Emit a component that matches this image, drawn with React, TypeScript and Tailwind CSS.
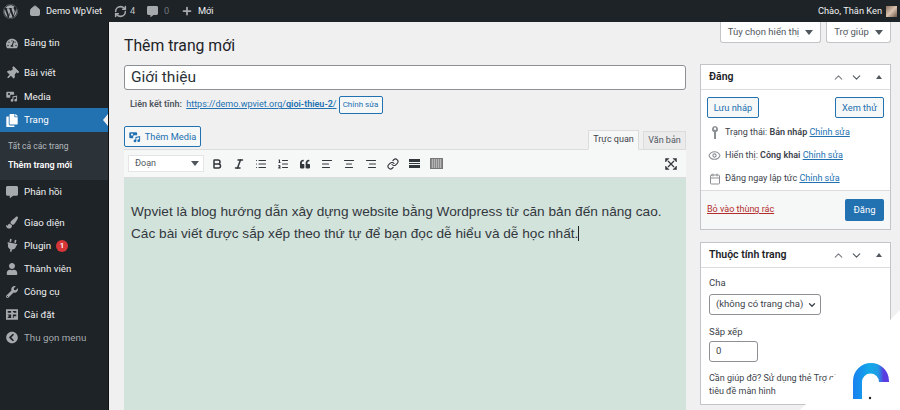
import React from "react";
import { Home, RefreshCw, Plus, ChevronUp, ChevronDown, Bold, Italic, List, ListOrdered, AlignLeft, AlignCenter, AlignRight, Link, Eye, Calendar } from "lucide-react";
import { FaWordpress, FaTachometerAlt, FaThumbtack, FaCopy, FaCommentAlt, FaPaintBrush, FaPlug, FaUser, FaWrench, FaChevronCircleLeft, FaQuoteLeft } from "react-icons/fa";

function Caret({ className = "" }: { className?: string }) {
  return <span className={"inline-block w-0 h-0 border-l-[4px] border-r-[4px] border-t-[5px] border-l-transparent border-r-transparent border-t-[#50575e] " + className} />;
}

function MediaIcon({ color, size = 16 }: { color: string; size?: number }) {
  return (
    <svg width={size} height={size} viewBox="0 0 20 20" fill={color}>
      <path fillRule="evenodd" d="M2 2h10a1.5 1.5 0 0 1 1.5 1.5V7H9a2 2 0 0 0-2 2v3H2a1.5 1.5 0 0 1-1.5-1.5v-7A1.5 1.5 0 0 1 2 2zm3 2.2a1.8 1.8 0 1 0 0 3.6 1.8 1.8 0 0 0 0-3.6z" />
      <path d="M18.5 8.5v7.7a2.3 2.3 0 1 1-1.6-2.2v-3.4l-4.6 1v4.9a2.3 2.3 0 1 1-1.6-2.2V9.8z" />
    </svg>
  );
}

function SettingsIcon() {
  return (
    <svg width="13" height="13" viewBox="0 0 14 14" fill="#a7aaad">
      <path fillRule="evenodd" d="M0 1h14v12H0zM2 3v2h4V3zm6 0v1h1v1h3V3zM2 7v1h1v2H2v1h4V7zm6 0v4h1V9h3V7z" />
    </svg>
  );
}

function MenuItem({ icon, label, active = false, badge, dim = false, h = "h-[23px]" }: { icon: React.ReactNode; label: string; active?: boolean; badge?: string; dim?: boolean; h?: string }) {
  return (
    <div className={`relative flex items-center ${h} pl-[6px] ${active ? "bg-[#2271b1] text-white" : dim ? "text-[#a7aaad]" : "text-[#f0f0f1]"}`}>
      <span className="w-[12px] h-[14px] flex items-center justify-center shrink-0">{icon}</span>
      <span className="text-[9.75px] ml-[6px] leading-none">{label}</span>
      {badge && <span className="ml-[5px] w-[12px] h-[12px] rounded-full bg-[#d63638] text-white text-[8px] font-semibold flex items-center justify-center">{badge}</span>}
      {active && <span className="absolute right-0 top-[6px] w-0 h-0 border-y-[6px] border-y-transparent border-r-[5px] border-r-[#f0f0f1]" />}
    </div>
  );
}

const ic = { size: 13, color: "#a7aaad" };

function Sidebar() {
  return (
    <aside className="w-[109px] shrink-0 bg-[#1d2327] border-r border-r-[#111] pt-[9px] text-[#f0f0f1] h-[388px]">
      <MenuItem h="h-[24px]" label="Bảng tin" icon={<FaTachometerAlt {...ic} />} />
      <div className="h-[6px]" />
      <MenuItem h="h-[24px]" label="Bài viết" icon={<FaThumbtack {...ic} className="rotate-45" />} />
      <MenuItem h="h-[23px]" label="Media" icon={<MediaIcon color="#a7aaad" size={15} />} />
      <MenuItem h="h-[24px]" active label="Trang" icon={<FaCopy size={13} color="#fff" />} />
      <div className="bg-[#2c3338] h-[48px] pt-[5px] pl-[8px] text-[9px] leading-none">
        <div className="text-[#b4b9be] text-[8.5px] h-[19px] flex items-center">Tất cả các trang</div>
        <div className="text-white font-semibold h-[19px] flex items-center">Thêm trang mới</div>
      </div>
      <MenuItem h="h-[24px]" label="Phản hồi" icon={<FaCommentAlt {...ic} size={12} />} />
      <div className="h-[7px]" />
      <MenuItem label="Giao diện" icon={<FaPaintBrush {...ic} />} />
      <MenuItem label="Plugin" badge="1" icon={<FaPlug {...ic} className="rotate-12" />} />
      <MenuItem label="Thành viên" icon={<FaUser {...ic} size={12} />} />
      <MenuItem label="Công cụ" icon={<FaWrench {...ic} size={12} />} />
      <MenuItem label="Cài đặt" icon={<SettingsIcon />} />
      <MenuItem dim label="Thu gọn menu" icon={<FaChevronCircleLeft {...ic} />} />
    </aside>
  );
}

function TopBar() {
  return (
    <header className="h-[22px] bg-[#1d2327] flex items-center text-[#f0f0f1] text-[9.25px] pl-[3px] pr-[3px]">
      <FaWordpress size={15} color="#a7aaad" className="shrink-0" />
      <Home size={12} color="#a7aaad" fill="#a7aaad" className="ml-[11px]" />
      <span className="ml-[5px] w-[56px] whitespace-nowrap">Demo WpViet</span>
      <RefreshCw size={13} color="#a7aaad" strokeWidth={2.8} className="ml-[12px]" />
      <span className="ml-[3px] w-[6px] text-[#c3c4c7]">4</span>
      <FaCommentAlt size={11} color="#a7aaad" className="ml-[11px]" />
      <span className="ml-[6px] w-[6px] text-[#72777c]">0</span>
      <Plus size={12} color="#a7aaad" strokeWidth={3.5} className="ml-[11px]" />
      <span className="ml-[5px]">Mới</span>
      <span className="ml-auto">Chào, Thân Ken</span>
      <span className="ml-[4px] w-[11px] h-[11px] bg-[linear-gradient(135deg,#8b6f5c,#d9c3ae_50%,#6f5648)]" />
    </header>
  );
}

const tb = { size: 12, color: "#32373c", strokeWidth: 2.2 };

function Toolbar() {
  return (
    <div className="h-[29px] bg-[#f6f7f7] border-y border-y-[#dcdcde] flex items-center pl-[4px] pr-[9px]">
      <div className="w-[76px] h-[17px] bg-white border border-[#e5e5e5] flex items-center justify-between pl-[6px] pr-[4px] text-[9px] text-[#50575e]">
        Đoạn <Caret />
      </div>
      <div className="flex items-center gap-[10px] ml-[7px]">
        <Bold {...tb} strokeWidth={3} />
        <Italic {...tb} strokeWidth={3} />
        <List {...tb} />
        <ListOrdered {...tb} />
        <FaQuoteLeft size={10} color="#32373c" className="mx-[1px]" />
        <AlignLeft {...tb} />
        <AlignCenter {...tb} />
        <AlignRight {...tb} />
        <Link {...tb} />
        <span className="flex flex-col gap-[1px] w-[11px]">
          <span className="h-[3px] bg-[#32373c]" />
          <span className="h-[1px] bg-[#32373c]" />
          <span className="h-[3px] bg-[#32373c]" />
        </span>
        <span className="w-[13px] h-[11px] bg-[repeating-linear-gradient(90deg,#8a8a8a_0_1px,#b5b5b5_1px_2px)] border border-[#777]" />
      </div>
      <svg width="12" height="12" viewBox="0 0 12 12" className="ml-auto" fill="#32373c" stroke="#32373c">
        <path d="M3 3 L9 9 M9 3 L3 9" strokeWidth="1.2" />
        <path d="M0.5 0.5h3.5L0.5 4z M11.5 0.5H8L11.5 4z M0.5 11.5h3.5L0.5 8z M11.5 11.5H8L11.5 8z" strokeWidth="0.5" />
      </svg>
    </div>
  );
}

function Editor() {
  return (
    <div className="w-[562px]">
      <div className="flex items-end justify-between h-[23px]">
        <button className="h-[21px] w-[77px] bg-[#f6f7f7] border border-[#2271b1] rounded-[2px] text-[#2271b1] text-[9.25px] flex items-center justify-center gap-[4px] mb-[2px]">
          <MediaIcon color="#2271b1" size={12} /> Thêm Media
        </button>
        <div className="flex gap-[4px] text-[9px] text-[#50575e] relative top-[1px]">
          <span className="w-[51px] h-[20px] bg-[#f6f7f7] border border-[#dcdcde] border-b-[#f6f7f7] flex items-center justify-center text-[#3c434a]">Trực quan</span>
          <span className="w-[43px] h-[19px] mt-[1px] bg-[#ebebec] border border-[#dcdcde] flex items-center justify-center">Văn bản</span>
        </div>
      </div>
      <Toolbar />
      <div className="h-[232px] bg-[#d2e3dc] pl-[7px] pt-[23px] text-[#32373c] font-['Liberation_Sans',sans-serif] text-[13.65px] leading-[22px]">
        <p className="whitespace-nowrap">Wpviet là blog hướng dẫn xây dựng website bằng Wordpress từ căn bản đến nâng cao.</p>
        <p className="whitespace-nowrap">Các bài viết được sắp xếp theo thứ tự để bạn đọc dễ hiểu và dễ học nhất.<span className="inline-block w-px h-[15px] bg-[#222] align-[-3px]" /></p>
      </div>
    </div>
  );
}

function BoxHeader({ title }: { title: string }) {
  return (
    <div className="h-[25px] border-b border-b-[#dcdcde] flex items-center pl-[8px] pr-[8px] text-[10.5px] font-semibold text-[#1d2327]">
      {title}
      <span className="ml-auto flex items-center gap-[5px] text-[#72777c]">
        <ChevronUp size={13} color="#787c82" />
        <ChevronDown size={13} color="#50575e" />
        <span className="ml-[8px] w-0 h-0 border-l-[3.5px] border-r-[3.5px] border-b-[4px] border-l-transparent border-r-transparent border-b-[#50575e]" />
      </span>
    </div>
  );
}

function EditLink() {
  return <span className="text-[#2271b1] underline">Chỉnh sửa</span>;
}

function Side() {
  return (
    <div className="w-[191px] ml-[14px] shrink-0 text-[9px] text-[#3c434a]">
      <section className="bg-white border border-[#c3c4c7]">
        <BoxHeader title="Đăng" />
        <div className="h-[100px] px-[6px] pt-[7px]">
          <div className="flex justify-between">
            <button className="w-[52px] h-[21px] border border-[#2271b1] rounded-[2px] bg-[#f6f7f7] text-[#2271b1] text-[9.25px]">Lưu nháp</button>
            <button className="w-[49px] h-[21px] border border-[#2271b1] rounded-[2px] bg-[#f6f7f7] text-[#2271b1] text-[9.25px]">Xem thử</button>
          </div>
          <div className="flex items-center h-[23px] mt-[3px] gap-[3px]">
            <span className="w-[15px] flex justify-center">
              <svg width="8" height="13" viewBox="0 0 8 13" fill="#8c8f94">
                <path fillRule="evenodd" d="M4 0a3.2 3.2 0 0 1 1 6.2V13H3V6.2A3.2 3.2 0 0 1 4 0zm0 1.6a1.2 1.2 0 1 0 0 2.4 1.2 1.2 0 0 0 0-2.4z" />
              </svg>
            </span>
            <span>Trạng thái: <b className="font-semibold">Bản nháp</b> <EditLink /></span>
          </div>
          <div className="flex items-center h-[23px] gap-[3px]">
            <span className="w-[15px] flex justify-center"><Eye size={13} color="#8c8f94" /></span>
            <span>Hiển thị: <b className="font-semibold">Công khai</b> <EditLink /></span>
          </div>
          <div className="flex items-center h-[23px] gap-[3px]">
            <span className="w-[15px] flex justify-center"><Calendar size={12} color="#8c8f94" /></span>
            <span>Đăng ngay lập tức <EditLink /></span>
          </div>
        </div>
        <div className="h-[39px] bg-[#f6f7f7] border-t border-t-[#dcdcde] flex items-center justify-between px-[6px]">
          <span className="text-[#b32d2e] underline">Bỏ vào thùng rác</span>
          <button className="w-[39px] h-[22px] rounded-[2px] bg-[#2271b1] text-white text-[9.5px]">Đăng</button>
        </div>
      </section>
      <section className="bg-white border border-[#c3c4c7] mt-[12px] h-[163px]">
        <BoxHeader title="Thuộc tính trang" />
        <div className="px-[8px] pt-[8px]">
          <div className="text-[9.5px] h-[13px] leading-[13px]">Cha</div>
          <div className="mt-[5px] w-[112px] h-[21px] border border-[#8c8f94] rounded-[3px] flex items-center justify-between pl-[6px] pr-[3px] text-[9.5px] whitespace-nowrap">
            (không có trang cha) <ChevronDown size={10} color="#3c434a" strokeWidth={3} />
          </div>
          <div className="mt-[10px] text-[9.5px] h-[13px] leading-[13px]">Sắp xếp</div>
          <div className="mt-[3px] w-[49px] h-[21px] border border-[#8c8f94] rounded-[3px] flex items-center pl-[6px] text-[9.5px]">0</div>
          <div className="mt-[10px] leading-[13px] whitespace-nowrap">Cần giúp đỡ? Sử dụng thẻ Trợ giúp<br />tiêu đề màn hình</div>
        </div>
      </section>
    </div>
  );
}

export default function App() {
  return (
    <div className="relative w-[900px] h-[410px] overflow-hidden bg-[#f0f0f1] font-['Roboto',sans-serif] text-[#3c434a]">
      <TopBar />
      <div className="flex">
        <Sidebar />
        <main className="flex-1 min-w-0 pl-[15px] relative">
          <div className="absolute right-[9px] top-0 flex gap-[5px] text-[9.5px] text-[#50575e]">
            <span className="w-[101px] h-[21px] bg-white border border-t-0 border-[#c3c4c7] rounded-b-[3px] flex items-center justify-center gap-[6px]">Tùy chọn hiển thị <Caret /></span>
            <span className="w-[65px] h-[21px] bg-white border border-t-0 border-[#c3c4c7] rounded-b-[3px] flex items-center justify-center gap-[6px]">Trợ giúp <Caret /></span>
          </div>
          <h1 className="pt-[13px] h-[42px] text-[15.75px] leading-[22px] text-[#1d2327]">Thêm trang mới</h1>
          <div className="flex">
            <div className="w-[562px]">
              <div className="mt-[1px] h-[25px] bg-white border border-[#8c8f94] rounded-[3px] flex items-center pl-[6px] text-[15.5px] text-[#2c3338]">Giới thiệu</div>
              <div className="flex items-center h-[20px] mt-[5px] pl-[6px] text-[9px]">
                <span className="font-semibold text-[#50575e] mr-[2px]">Liên kết tĩnh:&nbsp;</span>
                <span className="text-[#2271b1] underline">https://demo.wpviet.org/<b className="font-semibold">gioi-thieu-2</b>/</span>
                <span className="ml-[2px] w-[44px] h-[18px] border border-[#2271b1] rounded-[2px] bg-[#f6f7f7] text-[#2271b1] text-[8px] flex items-center justify-center">Chỉnh sửa</span>
              </div>
              <div className="mt-[11px]"><Editor /></div>
            </div>
            <Side />
          </div>
        </main>
      </div>
      <div className="absolute right-0 bottom-0 w-[100px] h-[100px] bg-white [clip-path:polygon(100%_0,100%_100%,0_100%)]" />
      <svg className="absolute left-[853px] top-[363px]" width="37" height="38" viewBox="0 0 37 38">
        <defs>
          <linearGradient id="g" x1="0" y1="0.5" x2="1" y2="0.5">
            <stop offset="0" stopColor="#1a80f0" />
            <stop offset="0.45" stopColor="#12a8e8" />
            <stop offset="0.7" stopColor="#1f9be5" />
            <stop offset="0.85" stopColor="#5a3de0" />
            <stop offset="1" stopColor="#5a3de0" />
          </linearGradient>
        </defs>
        <path d="M0 36 V18 A18 18 0 0 1 36 18 V19 H26 A8.5 8.5 0 0 0 9 19 V36 Z" fill="url(#g)" />
        <circle cx="17" cy="35" r="1.2" fill="#222" />
      </svg>
    </div>
  );
}
